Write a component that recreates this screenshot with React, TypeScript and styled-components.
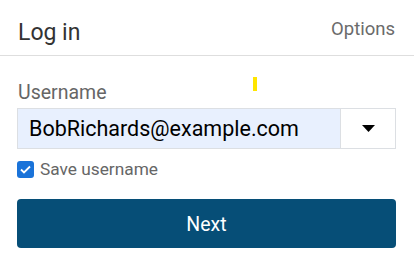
import React, { useState } from 'react';
import styled, { createGlobalStyle } from 'styled-components';

const GlobalStyle = createGlobalStyle`
  body {
    margin: 0;
    background: #fff;
    font-family: Roboto, 'Liberation Sans', sans-serif;
  }
`;

const Page = styled.div`
  position: relative;
  width: 414px;
  height: 271px;
  background: #fff;
`;

const Header = styled.div`
  display: flex;
  align-items: flex-start;
  justify-content: space-between;
  height: 56px;
  padding: 0 19px 0 18px;
  border-bottom: 1px solid #dedede;
  box-sizing: border-box;

  h1 {
    margin: 19px 0 0;
    font-size: 23px;
    line-height: 28px;
    font-weight: 400;
    color: #333;
  }
`;

const OptionsLink = styled.span`
  margin-top: 17px;
  font-size: 18.5px;
  line-height: 24px;
  color: #6b6b6b;
`;

const Body = styled.div`
  padding: 25px 18px 0 17px;
  display: flex;
  flex-direction: column;
`;

const Label = styled.label`
  font-size: 19.5px;
  line-height: 23px;
  color: #666;
  margin-left: 1px;
  margin-bottom: 4px;
`;

const Field = styled.div`
  display: flex;
  height: 41px;
  border: 1px solid #dcdfe3;
  box-sizing: border-box;
  width: 379px;
`;

const Input = styled.input`
  flex: 1;
  min-width: 0;
  border: none;
  outline: none;
  background: #e8f0fe;
  font-family: Roboto, 'Liberation Sans', sans-serif;
  font-size: 21.5px;
  color: #000;
  padding: 0 0 0 11px;
`;

const DropButton = styled.button`
  width: 55px;
  border: none;
  border-left: 1px solid #dcdfe3;
  background: #fff;
  display: flex;
  align-items: center;
  justify-content: center;
  padding: 0;
`;

const CheckRow = styled.label`
  display: flex;
  align-items: center;
  gap: 6px;
  margin-top: 10px;
  font-size: 17.3px;
  line-height: 21px;
  color: #666;
`;

const Box = styled.span<{ $checked: boolean }>`
  width: 17px;
  height: 17px;
  border-radius: 3px;
  background: ${(p) => (p.$checked ? '#1a73d9' : '#fff')};
  border: ${(p) => (p.$checked ? 'none' : '1px solid #999')};
  display: flex;
  align-items: center;
  justify-content: center;
`;

const NextButton = styled.button`
  margin-top: 19px;
  width: 379px;
  height: 49px;
  border: none;
  border-radius: 4px;
  background: #064e77;
  color: #fff;
  font-family: Roboto, 'Liberation Sans', sans-serif;
  font-size: 19.5px;
  padding-top: 2px;
`;

const Marker = styled.div`
  position: absolute;
  left: 253px;
  top: 77px;
  width: 4px;
  height: 14px;
  background: #ffe500;
`;

export default function App() {
  const [checked, setChecked] = useState(true);
  return (
    <Page>
      <GlobalStyle />
      <Header>
        <h1>Log in</h1>
        <OptionsLink>Options</OptionsLink>
      </Header>
      <Body>
        <Label>Username</Label>
        <Field>
          <Input defaultValue="BobRichards@example.com" />
          <DropButton>
            <svg width="13" height="7" viewBox="0 0 13 7">
              <path d="M0 0H13L6.5 7Z" fill="#000" />
            </svg>
          </DropButton>
        </Field>
        <CheckRow onClick={() => setChecked(!checked)}>
          <Box $checked={checked}>
            {checked && (
              <svg width="11" height="9" viewBox="0 0 11 9">
                <path d="M1 4.5L4 7.5L10 1.5" stroke="#fff" strokeWidth="1.8" fill="none" />
              </svg>
            )}
          </Box>
          Save username
        </CheckRow>
        <NextButton>Next</NextButton>
      </Body>
      <Marker />
    </Page>
  );
}
